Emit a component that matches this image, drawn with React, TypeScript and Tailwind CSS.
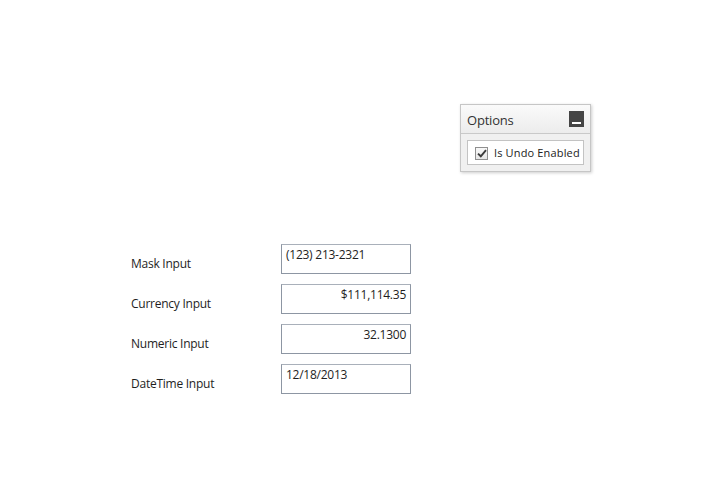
import React from "react"

const fields = [
  { label: "Mask Input", value: "(123) 213-2321", align: "text-left" },
  { label: "Currency Input", value: "$111,114.35", align: "text-right" },
  { label: "Numeric Input", value: "32.1300", align: "text-right" },
  { label: "DateTime Input", value: "12/18/2013", align: "text-left" },
]

export default function App() {
  return (
    <div
      className="relative w-[715px] h-[500px] bg-white text-[12px] tracking-[-0.25px] text-[#1e1e1e]"
      style={{ fontFamily: '"Segoe UI", "Open Sans", "Noto Sans", sans-serif' }}
    >
      {/* Options panel */}
      <div className="absolute left-[460px] top-[104px] w-[131px] border border-[#c6c6c6] bg-[#f0f0f0] shadow-[1px_1px_3px_rgba(0,0,0,0.2)]">
        <div className="flex items-center justify-between h-[29px] pl-[6px] pr-[6px] border-b border-[#c9c9c9] bg-gradient-to-b from-[#fafafa] to-[#ececec]">
          <span className="text-[13px] text-[#333] pt-[3px] tracking-[-0.2px]">Options</span>
          <div className="w-[15px] h-[16px] bg-[#454545] flex items-end justify-center pb-[3px]">
            <div className="w-[9px] h-[2px] bg-white" />
          </div>
        </div>
        <div className="px-[6px] pt-[6px] pb-[6px]">
          <div className="flex items-center gap-[6px] h-[25px] pl-[7px] pt-[1px] border border-[#c3c3c3] bg-white whitespace-nowrap">
            <div className="shrink-0 w-[13px] h-[13px] border border-[#8f8f8f] bg-gradient-to-b from-[#f8f8f8] to-[#e6e6e6] flex items-center justify-center">
              <svg width="10" height="9" viewBox="0 0 10 9">
                <path d="M1 4.6 L3.8 7.3 L9 1.2" fill="none" stroke="#3a3a3a" strokeWidth="1.9" />
              </svg>
            </div>
            <span className="text-[11px] text-[#222] tracking-[0.15px]">Is Undo Enabled</span>
          </div>
        </div>
      </div>

      {/* Form */}
      <div className="absolute left-[131px] top-[244px] flex flex-col gap-[10px]">
        {fields.map((f) => (
          <div key={f.label} className="flex items-start">
            <div className="w-[150px] pt-[12px] leading-[16px] whitespace-nowrap">{f.label}</div>
            <div
              className={`w-[130px] h-[30px] border border-[#8d96a3] border-t-[#a9b0ba] bg-white px-[4px] pt-[2px] leading-[16px] ${f.align}`}
            >
              {f.value}
            </div>
          </div>
        ))}
      </div>
    </div>
  )
}
